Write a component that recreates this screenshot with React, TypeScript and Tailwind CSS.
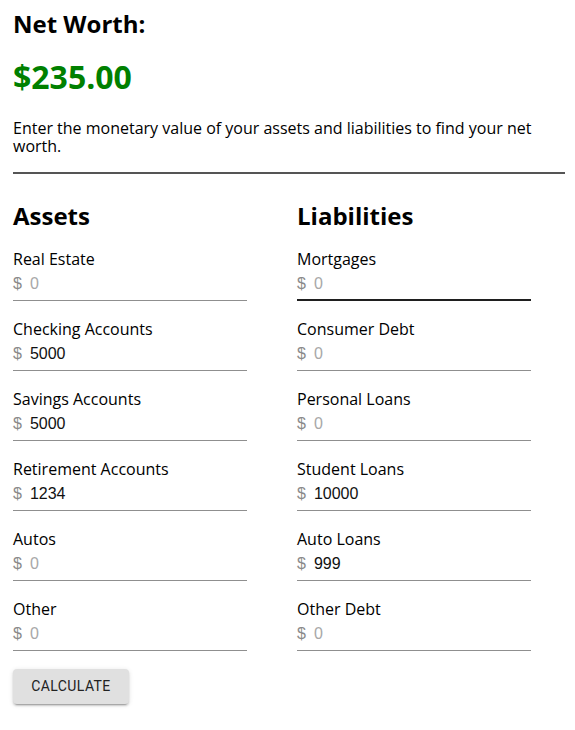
import React from "react";

type Field = { label: string; value: string; focused?: boolean };

const assets: Field[] = [
  { label: "Real Estate", value: "" },
  { label: "Checking Accounts", value: "5000" },
  { label: "Savings Accounts", value: "5000" },
  { label: "Retirement Accounts", value: "1234" },
  { label: "Autos", value: "" },
  { label: "Other", value: "" },
];

const liabilities: Field[] = [
  { label: "Mortgages", value: "", focused: true },
  { label: "Consumer Debt", value: "" },
  { label: "Personal Loans", value: "" },
  { label: "Student Loans", value: "10000" },
  { label: "Auto Loans", value: "999" },
  { label: "Other Debt", value: "" },
];

function MoneyInput({ label, value, focused }: Field) {
  return (
    <div className="flex flex-col w-[234px] mb-[17px]">
      <label className="text-[16px] leading-[22px] text-black">{label}</label>
      <div
        className={
          "flex items-center h-[31px] pb-[2px] font-['Liberation_Sans',Arial,sans-serif] text-[16px] " +
          (focused ? "border-b-2 border-[#1f1f1f]" : "border-b border-[#8f8f8f]")
        }
      >
        <span className="text-[#8a8a8a] mr-[8px]">$</span>
        <span className={value ? "text-[#111]" : "text-[#a8a8a8]"}>{value || "0"}</span>
      </div>
    </div>
  );
}

function Column({ title, fields }: { title: string; fields: Field[] }) {
  return (
    <div className="w-[284px] shrink-0 flex flex-col">
      <h3 className="text-[24px] font-bold leading-[28px] mb-[18px]">{title}</h3>
      {fields.map((f) => (
        <MoneyInput key={f.label} {...f} />
      ))}
    </div>
  );
}

export default function App() {
  return (
    <div className="bg-white w-[575px] h-[730px] px-[13px] pt-[10px] font-['Open_Sans',sans-serif] text-black">
      <h2 className="text-[24px] font-bold leading-[28px]">Net Worth:</h2>
      <h1 className="mt-[20px] text-[32px] font-bold leading-[38px] text-[#008000]">$235.00</h1>
      <p className="mt-[23px] text-[16px] leading-[18px] w-[552px]">
        Enter the monetary value of your assets and liabilities to find your net worth.
      </p>
      <hr className="mt-[17px] w-[552px] border-t-2 border-[#555]" />
      <div className="flex mt-[28px]">
        <Column title="Assets" fields={assets} />
        <Column title="Liabilities" fields={liabilities} />
      </div>
      <button className="mt-[1px] h-[35px] w-[116px] bg-[#e0e0e0] rounded-[4px] shadow-[0_3px_1px_-2px_rgba(0,0,0,0.2),0_2px_2px_0_rgba(0,0,0,0.14),0_1px_5px_0_rgba(0,0,0,0.12)] font-['Roboto',sans-serif] text-[14px] tracking-[0.4px] text-[#222] uppercase">
        Calculate
      </button>
    </div>
  );
}
